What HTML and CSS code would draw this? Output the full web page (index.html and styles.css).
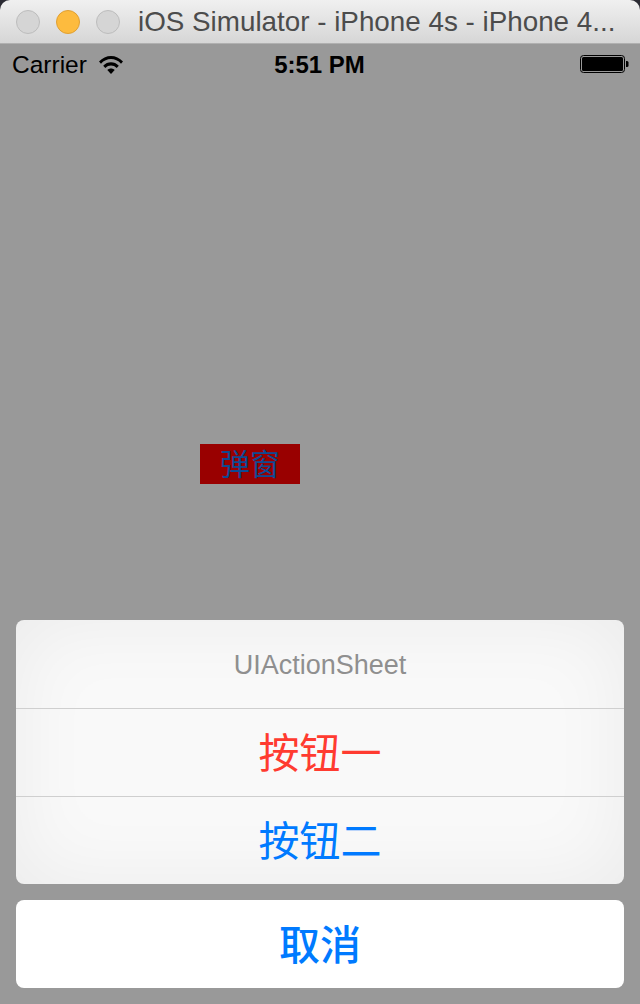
FILE: index.html
```html
<!DOCTYPE html>
<html lang="zh-CN">
<head>
  <meta charset="UTF-8">
  <title>iOS Simulator</title>
  <link rel="stylesheet" href="styles.css">
</head>
<body>
<div class="window">
  <!-- title bar -->
  <div class="titlebar">
    <span class="light"></span>
    <span class="light light-min"></span>
    <span class="light"></span>
    <span class="title">iOS Simulator - iPhone 4s - iPhone 4...</span>
  </div>

  <div class="screen">
    <!-- status bar -->
    <div class="statusbar">
      <div class="status-left">
        <span>Carrier</span>
        <svg class="wifi" width="24" height="19" viewBox="0 0 24 19">
          <path d="M0 6.500C6.500 -1 17.500 -1 24 6.500l-2 2.200C16.500 2.500 7.500 2.500 2 8.700z"/>
          <path d="M4.200 10.800c4.300-4.600 11.300-4.600 15.600 0l-2.100 2.200c-3.200-3.300-8.200-3.300-11.400 0z"/>
          <path d="M8.300 14.900c2.100-2 5.300-2 7.400 0L12 19z"/>
        </svg>
      </div>
      <div class="status-time">5:51 PM</div>
      <div class="status-right">
        <svg width="50" height="20" viewBox="0 0 50 20">
          <rect x="1.500" y="1.500" width="44" height="17" rx="3" fill="none" stroke="#000" stroke-width="1"/>
          <rect x="3" y="3" width="41" height="14" rx="1.500"/>
          <path d="M47 7h1a1.500 1.500 0 0 1 1.500 1.500v3A1.500 1.500 0 0 1 48 13h-1z"/>
        </svg>
      </div>
    </div>

    <!-- page content -->
    <div class="stage">
      <button class="popup-btn">弹窗</button>
    </div>

    <!-- action sheet -->
    <div class="sheet">
      <div class="sheet-group">
        <div class="sheet-title">UIActionSheet</div>
        <div class="sheet-row danger">按钮一</div>
        <div class="sheet-row">按钮二</div>
      </div>
      <div class="sheet-cancel">取消</div>
    </div>
  </div>
</div>
</body>
</html>
```

FILE: styles.css
```css
html, body {
  margin: 0;
  padding: 0;
  height: 100%;
}
body {
  background-color: #2b2b33;
  font-family: "Liberation Sans", "Noto Sans CJK SC", sans-serif;
  overflow: hidden;
}
.window {
  display: flex;
  flex-direction: column;
  height: 1004px;
}
.titlebar {
  display: flex;
  align-items: center;
  height: 43px;
  padding-left: 16px;
  gap: 16px;
  background: linear-gradient(#f0f0f0, #d6d6d6);
  border-bottom: 1px solid #b0b0b0;
  border-radius: 10px 10px 0 0;
  flex-shrink: 0;
}
.light {
  width: 22px;
  height: 22px;
  border: 1px solid #bdbdbd;
  border-radius: 50%;
  background-color: #d5d5d5;
  flex-shrink: 0;
}
.light-min {
  background-color: #fdbb3e;
  border-color: #e0a033;
}
.title {
  margin-left: 2px;
  font-size: 27.8px;
  color: #4c4c4c;
  white-space: nowrap;
}
.screen {
  flex: 1;
  display: flex;
  flex-direction: column;
  background-color: #999;
}
.statusbar {
  display: flex;
  align-items: center;
  justify-content: space-between;
  height: 40px;
  padding: 0 11px 0 12px;
  color: #000;
  font-size: 24.5px;
  position: relative;
}
.status-left {
  display: flex;
  align-items: center;
  gap: 12px;
}
.status-left span {
  padding-top: 2px;
}
.status-time {
  position: absolute;
  left: -1px;
  right: 0;
  padding-top: 2px;
  text-align: center;
  font-size: 24px;
  font-weight: bold;
}
.status-right {
  display: flex;
}
.stage {
  flex: 1;
  display: flex;
  justify-content: flex-start;
  padding: 360px 0 0 200px;
}
.popup-btn {
  width: 100px;
  height: 40px;
  padding: 2px 0 0;
  border: none;
  background-color: #990000;
  color: #0d4a93;
  font-family: inherit;
  font-size: 30px;
  line-height: 38px;
}
.sheet {
  display: flex;
  flex-direction: column;
  gap: 16px;
  padding: 0 16px 16px;
}
.sheet-group {
  border-radius: 8px;
  overflow: hidden;
  background-color: #f9f9f9;
  box-shadow: inset 0 0 80px rgba(0, 0, 0, 0.06);
}
.sheet-title {
  height: 88px;
  line-height: 90px;
  text-align: center;
  font-size: 27px;
  color: #8f8f8f;
}
.sheet-row {
  height: 87px;
  line-height: 90px;
  border-top: 1px solid #cfcfcf;
  text-align: center;
  font-size: 41px;
  color: #007aff;
}
.danger {
  color: #ff3b30;
}
.sheet-cancel {
  height: 88px;
  line-height: 92px;
  border-radius: 8px;
  background-color: #fff;
  text-align: center;
  font-size: 41px;
  font-weight: 500;
  color: #007aff;
}
```
